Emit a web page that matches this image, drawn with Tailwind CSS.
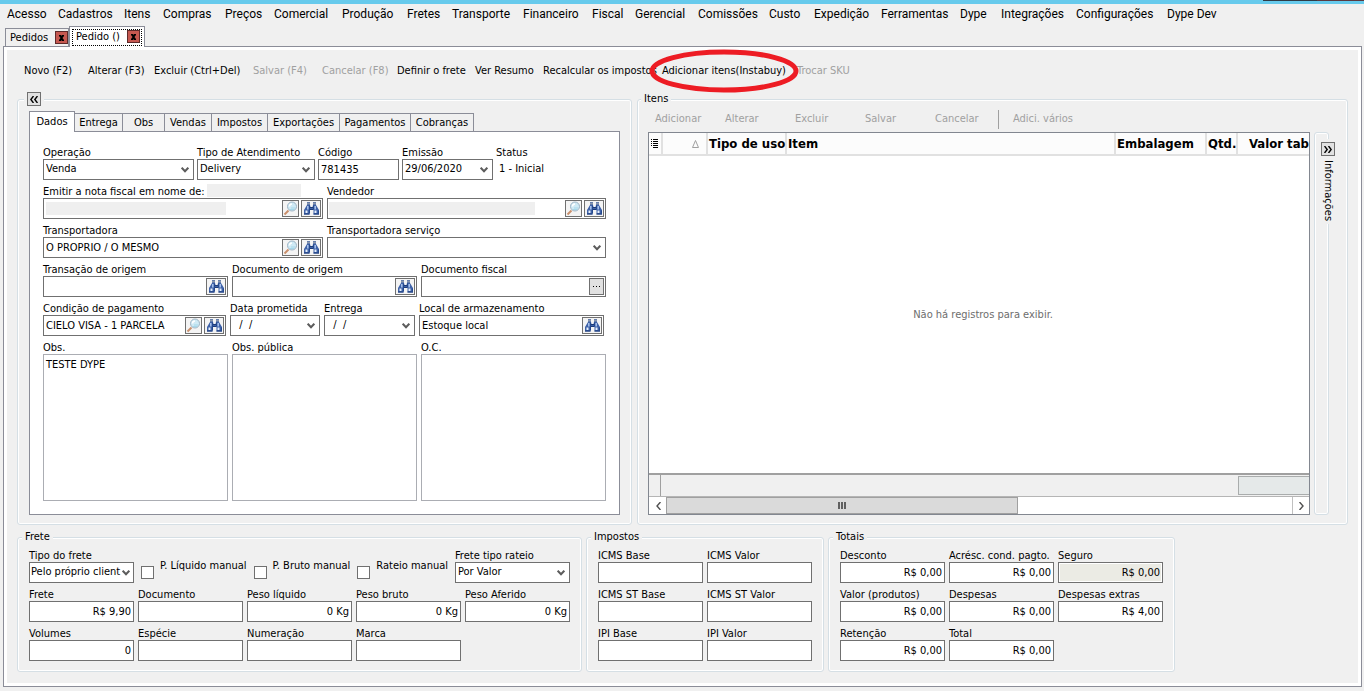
<!DOCTYPE html>
<html lang="pt-BR">
<head>
    <meta charset="UTF-8">
    <meta name="viewport" content="width=device-width, initial-scale=1.0">
    <title>Pedido</title>
    <script src="https://cdn.jsdelivr.net/npm/@tailwindcss/browser@4"></script>
</head>
<body class="min-h-screen flex flex-col bg-[#f0f0f0] text-black text-[11px] leading-[14px] font-['DejaVu_Sans_Condensed','DejaVu_Sans',sans-serif] overflow-x-hidden">
    <!-- Icons -->
    <svg class="hidden">
        <symbol id="chevron" viewBox="0 0 8 6"><path d="M.7.7 4 4.200 7.300.7" fill="none" stroke="#5c5c5c" stroke-width="2"/></symbol>
        <symbol id="lens" viewBox="0 0 15 15">
            <path d="M1.500 13.500 5.500 9.500" stroke="#c98f6b" stroke-width="2"/>
            <circle cx="9" cy="5.500" r="4.500" fill="#cfeaf5" stroke="#9fb4c4"/>
            <path d="M6.500 5.500a2.500 2.500 0 0 1 2.500-2.500" fill="none" stroke="#fff" stroke-width="1.500"/>
            <path d="M7 8.500h4M8 7h4" stroke="#a5d8ea"/>
        </symbol>
        <symbol id="binoc" viewBox="0 0 17 15">
            <path d="M4 1h3v3l.5 2h2l.5-2V1h3v3l3 5v4.500h-5.500V9h-4v4.500H1V9l3-5z" fill="#3f62a8"/>
            <path d="M4 2.500h3M10 2.500h3" stroke="#8a97ad" stroke-width="2"/>
            <path d="M4.800 5v3.500M12.200 5v3.500" stroke="#a9c4ee" stroke-width="1.500"/>
            <path d="M3.500 9.500v2.500M12.500 9.500v2.500" stroke="#e6effc" stroke-width="2"/>
            <path d="M1 13h5.500M10.500 13h5.500M7 6.500h3M7 8.500h3" stroke="#1d3b78"/>
            <path d="M6.500 4.500v8M15.500 9.500v3M10.500 4.500v4" stroke="#24488c"/>
        </symbol>
    </svg>

    <!-- Window edge -->
    <div class="h-1 bg-[#67caec] flex justify-end">
        <div class="h-px w-[54px] bg-[#2f3b46]"></div>
        <div class="h-px w-[47px] bg-[#5b3a40]"></div>
    </div>

    <!-- Menu -->
    <nav class="h-[22px] pl-[7px] pb-0.5 grid grid-cols-[51px_66px_39px_62px_49px_68px_65px_45px_71px_69px_43px_63px_71px_45px_67px_79px_41px_75px_91px_60px] items-center text-[12px] leading-4 font-[Roboto,'Open_Sans',sans-serif] whitespace-nowrap">
        <a href="#">Acesso</a>
        <a href="#">Cadastros</a>
        <a href="#">Itens</a>
        <a href="#">Compras</a>
        <a href="#">Preços</a>
        <a href="#">Comercial</a>
        <a href="#">Produção</a>
        <a href="#">Fretes</a>
        <a href="#">Transporte</a>
        <a href="#">Financeiro</a>
        <a href="#">Fiscal</a>
        <a href="#">Gerencial</a>
        <a href="#">Comissões</a>
        <a href="#">Custo</a>
        <a href="#">Expedição</a>
        <a href="#">Ferramentas</a>
        <a href="#">Dype</a>
        <a href="#">Integrações</a>
        <a href="#">Configurações</a>
        <a href="#">Dype Dev</a>
    </nav>

    <!-- Open windows -->
    <div class="h-5 pl-[5px] flex items-end">
        <div class="w-16 h-[18px] pl-1 flex items-center justify-between border border-b-0 border-[#8b8d98]">
            <span>Pedidos</span>
            <button class="size-[13px] border border-[#5e2a2a] bg-[#c65850] flex items-center justify-center" aria-label="Fechar">
                <svg class="w-[5px] h-1.5" viewBox="0 0 5 6"><path d="M0 0h2l.5 1L3 0h2v1L3.500 3 5 5v1H3l-.5-1L2 6H0V5l1.500-2L0 1z"/></svg>
            </button>
        </div>
        <div class="relative z-10 w-[76px] h-[21px] -mb-px p-0.5 border border-b-0 border-[#8b8d98] bg-white">
            <div class="h-[17px] pl-[3px] pr-px flex items-start justify-between border border-dotted border-black">
                <span>Pedido ()</span>
                <button class="size-[13px] border border-[#5e2a2a] bg-[#c65850] flex items-center justify-center" aria-label="Fechar">
                    <svg class="w-[5px] h-1.5" viewBox="0 0 5 6"><path d="M0 0h2l.5 1L3 0h2v1L3.500 3 5 5v1H3l-.5-1L2 6H0V5l1.500-2L0 1z"/></svg>
                </button>
            </div>
        </div>
    </div>

    <main class="flex-1 flex flex-col ml-[3px] mr-0.5 mb-1 p-[3px] border border-[#8b8d98] bg-white">
        <div class="flex-1 flex flex-col pl-2.5 pr-2.5 pb-[11px] bg-[#f0f0f0]">
            <!-- Toolbar -->
            <div class="h-[42px] pl-[7px] grid grid-cols-[64px_66px_99px_69px_75px_78px_68px_119px_135px_60px] items-center justify-items-start whitespace-nowrap">
                <button>Novo (F2)</button>
                <button>Alterar (F3)</button>
                <button>Excluir (Ctrl+Del)</button>
                <button disabled class="text-[#a0a0a0]">Salvar (F4)</button>
                <button disabled class="text-[#a0a0a0]">Cancelar (F8)</button>
                <button>Definir o frete</button>
                <button>Ver Resumo</button>
                <button>Recalcular os impostos</button>
                <button class="relative z-10">Adicionar itens(Instabuy)
                    <svg class="absolute left-1/2 top-1/2 -translate-1/2 w-[150px] h-11" viewBox="0 0 150 44"><ellipse cx="75" cy="22" rx="72" ry="19" fill="none" stroke="#ed1c24" stroke-width="5"/></svg>
                </button>
                <button disabled class="text-[#a0a0a0]">Trocar SKU</button>
            </div>

            <div class="flex-1 flex gap-[5px]">
                <!-- Order data -->
                <fieldset class="w-[615px] shrink-0 min-w-0 flex flex-col px-[11px] pb-[9px] border border-[#d5dfe5] rounded-[3px] shadow-[inset_0_0_0_1px_white]">
                    <legend class="-ml-[5px] px-[3px] bg-[#f0f0f0]">
                        <button class="size-3.5 border border-[#707070] bg-[#e1e1e1] flex items-center justify-center" aria-label="Recolher">
                            <svg class="w-2 h-[7px]" viewBox="0 0 8 7"><path d="M3.500 0 .8 3.500l2.700 3.500M7.500 0 4.800 3.500l2.700 3.500" fill="none" stroke="#000" stroke-width="1.400"/></svg>
                        </button>
                    </legend>
                    <div class="mt-[5px] h-5 flex items-end text-center [&_button]:h-[18px] [&_button]:pt-px [&_button]:border [&_button]:border-l-0 [&_button]:border-b-0 [&_button]:border-[#8b8d98]" role="tablist">
                        <div class="relative z-10 w-[46px] h-[21px] -mb-px pt-[3px] border border-b-0 border-[#8b8d98] bg-white" role="tab">Dados</div>
                        <button class="w-12">Entrega</button>
                        <button class="w-[42px]">Obs</button>
                        <button class="w-[47px]">Vendas</button>
                        <button class="w-14">Impostos</button>
                        <button class="w-[72px]">Exportações</button>
                        <button class="w-[71px]">Pagamentos</button>
                        <button class="w-[63px]">Cobranças</button>
                    </div>
                    <div class="flex-1 flex flex-col px-[13px] pt-[9px] pb-[13px] border border-[#8b8d98] bg-white whitespace-nowrap [&_label]:block [&_label]:h-[18px] [&_label]:pt-[5px]">
                        <div class="flex gap-[3px]">
                            <div class="w-[151px]">
                                <label for="operacao">Operação</label>
                                <div class="relative">
                                    <select id="operacao" class="w-full h-[21px] pl-0.5 pb-px appearance-none border border-[#707070] bg-white"><option>Venda</option></select>
                                    <svg class="absolute right-[5px] top-2 w-2 h-1.5 pointer-events-none"><use href="#chevron"/></svg>
                                </div>
                            </div>
                            <div class="w-[118px]">
                                <label for="tipo">Tipo de Atendimento</label>
                                <div class="relative">
                                    <select id="tipo" class="w-full h-[21px] pl-0.5 pb-px appearance-none border border-[#707070] bg-white"><option>Delivery</option></select>
                                    <svg class="absolute right-[5px] top-2 w-2 h-1.5 pointer-events-none"><use href="#chevron"/></svg>
                                </div>
                            </div>
                            <div class="w-[81px]">
                                <label for="codigo">Código</label>
                                <input id="codigo" value="781435" class="w-full h-[21px] pl-0.5 pb-px border border-[#707070]">
                            </div>
                            <div class="w-[91px]">
                                <label for="emissao">Emissão</label>
                                <div class="h-[21px] flex border border-[#707070]">
                                    <input id="emissao" value="29/06/2020" class="flex-1 min-w-0 pl-0.5 pb-px">
                                    <button class="px-1" aria-label="Abrir calendário"><svg class="w-2 h-1.5"><use href="#chevron"/></svg></button>
                                </div>
                            </div>
                            <div>
                                <div class="h-[18px] pt-[5px]">Status</div>
                                <div class="pl-[3px] pt-[3px]">1 - Inicial</div>
                            </div>
                        </div>

                        <div class="flex gap-1">
                            <div class="w-[280px]">
                                <div class="flex gap-0.5">
                                    <label for="nota">Emitir a nota fiscal em nome de:</label>
                                    <span class="mt-1 w-[94px] h-[13px] bg-[#efefef]"></span>
                                </div>
                                <div class="h-[21px] p-px flex gap-0.5 border border-[#707070]">
                                    <span class="ml-px mt-0.5 w-[180px] h-[13px] bg-[#efefef]"></span>
                                    <input id="nota" class="flex-1 min-w-0">
                                    <button class="w-[17px] h-[17px] border border-[#707070] bg-[#f4f4f4]" aria-label="Visualizar"><svg class="size-[15px]"><use href="#lens"/></svg></button>
                                    <button class="w-5 h-[17px] border border-[#707070] bg-[#f4f4f4] flex justify-center" aria-label="Procurar"><svg class="w-[17px] h-[15px]"><use href="#binoc"/></svg></button>
                                </div>
                            </div>
                            <div class="w-[279px]">
                                <label for="vendedor">Vendedor</label>
                                <div class="h-[21px] p-px flex gap-0.5 border border-[#707070]">
                                    <span class="mt-0.5 w-[206px] h-[13px] bg-[#efefef]"></span>
                                    <input id="vendedor" class="flex-1 min-w-0">
                                    <button class="w-[17px] h-[17px] border border-[#707070] bg-[#f4f4f4]" aria-label="Visualizar"><svg class="size-[15px]"><use href="#lens"/></svg></button>
                                    <button class="w-5 h-[17px] border border-[#707070] bg-[#f4f4f4] flex justify-center" aria-label="Procurar"><svg class="w-[17px] h-[15px]"><use href="#binoc"/></svg></button>
                                </div>
                            </div>
                        </div>

                        <div class="flex gap-1">
                            <div class="w-[280px]">
                                <label for="transportadora">Transportadora</label>
                                <div class="h-[21px] p-px flex gap-0.5 border border-[#707070]">
                                    <input id="transportadora" value="O PROPRIO / O MESMO" class="flex-1 min-w-0 pl-px">
                                    <button class="w-[17px] h-[17px] border border-[#707070] bg-[#f4f4f4]" aria-label="Visualizar"><svg class="size-[15px]"><use href="#lens"/></svg></button>
                                    <button class="w-5 h-[17px] border border-[#707070] bg-[#f4f4f4] flex justify-center" aria-label="Procurar"><svg class="w-[17px] h-[15px]"><use href="#binoc"/></svg></button>
                                </div>
                            </div>
                            <div class="w-[279px]">
                                <label for="servico">Transportadora serviço</label>
                                <div class="relative">
                                    <select id="servico" class="w-full h-[21px] pl-0.5 pb-px appearance-none border border-[#707070] bg-white"><option></option></select>
                                    <svg class="absolute right-[5px] top-2 w-2 h-1.5 pointer-events-none"><use href="#chevron"/></svg>
                                </div>
                            </div>
                        </div>

                        <div class="flex gap-1">
                            <div class="w-[185px]">
                                <label for="transacao">Transação de origem</label>
                                <div class="h-[21px] p-px flex border border-[#707070]">
                                    <input id="transacao" class="flex-1 min-w-0 pl-px">
                                    <button class="w-5 h-[17px] border border-[#707070] bg-[#f4f4f4] flex justify-center" aria-label="Procurar"><svg class="w-[17px] h-[15px]"><use href="#binoc"/></svg></button>
                                </div>
                            </div>
                            <div class="w-[185px]">
                                <label for="docorigem">Documento de origem</label>
                                <div class="h-[21px] p-px flex border border-[#707070]">
                                    <input id="docorigem" class="flex-1 min-w-0 pl-px">
                                    <button class="w-5 h-[17px] border border-[#707070] bg-[#f4f4f4] flex justify-center" aria-label="Procurar"><svg class="w-[17px] h-[15px]"><use href="#binoc"/></svg></button>
                                </div>
                            </div>
                            <div class="w-[185px]">
                                <label for="docfiscal">Documento fiscal</label>
                                <div class="h-[21px] p-px flex border border-[#707070]">
                                    <input id="docfiscal" class="flex-1 min-w-0 pl-px">
                                    <button class="w-[15px] h-[17px] border border-[#707070] bg-[#e1e1e1] flex items-center justify-center" aria-label="Selecionar"><svg class="w-2 h-px" viewBox="0 0 8 1"><path d="M0 0h1v1H0zM3 0h1v1H3zM6 0h1v1H6z"/></svg></button>
                                </div>
                            </div>
                        </div>

                        <div class="flex gap-1">
                            <div class="w-[183px]">
                                <label for="condicao">Condição de pagamento</label>
                                <div class="h-[21px] p-px flex gap-0.5 border border-[#707070]">
                                    <input id="condicao" value="CIELO VISA - 1 PARCELA" class="flex-1 min-w-0 pl-px">
                                    <button class="w-[17px] h-[17px] border border-[#707070] bg-[#f4f4f4]" aria-label="Visualizar"><svg class="size-[15px]"><use href="#lens"/></svg></button>
                                    <button class="w-5 h-[17px] border border-[#707070] bg-[#f4f4f4] flex justify-center" aria-label="Procurar"><svg class="w-[17px] h-[15px]"><use href="#binoc"/></svg></button>
                                </div>
                            </div>
                            <div class="w-[90px]">
                                <label for="prometida">Data prometida</label>
                                <div class="h-[21px] flex border border-[#707070]">
                                    <input id="prometida" value="  /  /" class="flex-1 min-w-0 pl-0.5 pb-px">
                                    <button class="px-1" aria-label="Abrir calendário"><svg class="w-2 h-1.5"><use href="#chevron"/></svg></button>
                                </div>
                            </div>
                            <div class="w-[91px]">
                                <label for="entrega">Entrega</label>
                                <div class="h-[21px] flex border border-[#707070]">
                                    <input id="entrega" value="  /  /" class="flex-1 min-w-0 pl-0.5 pb-px">
                                    <button class="px-1" aria-label="Abrir calendário"><svg class="w-2 h-1.5"><use href="#chevron"/></svg></button>
                                </div>
                            </div>
                            <div class="w-[185px]">
                                <label for="local">Local de armazenamento</label>
                                <div class="h-[21px] p-px flex border border-[#707070]">
                                    <input id="local" value="Estoque local" class="flex-1 min-w-0 pl-px">
                                    <button class="w-5 h-[17px] border border-[#707070] bg-[#f4f4f4] flex justify-center" aria-label="Procurar"><svg class="w-[17px] h-[15px]"><use href="#binoc"/></svg></button>
                                </div>
                            </div>
                        </div>

                        <div class="flex-1 grid grid-cols-3 gap-1">
                            <div class="flex flex-col">
                                <label for="obs">Obs.</label>
                                <textarea id="obs" class="flex-1 w-full px-0.5 pt-[3px] resize-none border border-[#abadb3]">TESTE DYPE</textarea>
                            </div>
                            <div class="flex flex-col">
                                <label for="obspublica">Obs. pública</label>
                                <textarea id="obspublica" class="flex-1 w-full px-0.5 pt-[3px] resize-none border border-[#abadb3]"></textarea>
                            </div>
                            <div class="flex flex-col">
                                <label for="oc">O.C.</label>
                                <textarea id="oc" class="flex-1 w-full px-0.5 pt-[3px] resize-none border border-[#abadb3]"></textarea>
                            </div>
                        </div>
                    </div>
                </fieldset>

                <!-- Items -->
                <fieldset class="flex-1 min-w-0 flex flex-col pl-2.5 pr-[18px] pb-[9px] border border-[#d5dfe5] rounded-[3px] shadow-[inset_0_0_0_1px_white]">
                    <legend class="-ml-[7px] px-[3px] bg-[#f0f0f0]">Itens</legend>
                    <div class="h-[26px] pl-[7px] flex items-center text-left text-[#a0a0a0] [&_button]:w-[70px] [&_button]:text-left">
                        <button disabled>Adicionar</button>
                        <button disabled>Alterar</button>
                        <button disabled>Excluir</button>
                        <button disabled>Salvar</button>
                        <button disabled>Cancelar</button>
                        <span class="-ml-[7px] mr-3.5 w-px h-[19px] bg-[#a0a0a0]"></span>
                        <button disabled>Adici. vários</button>
                    </div>
                    <div class="flex-1 flex gap-1">
                        <div class="flex-1 min-w-0 flex flex-col border border-[#828790] bg-white">
                            <table class="w-full table-fixed text-left text-[13px] leading-4 whitespace-nowrap bg-[#fcfcfc]">
                                <thead>
                                    <tr class="h-[22px] border-b-2 border-[#e1e1e1] [&_th]:border-r-2 [&_th]:border-[#e1e1e1] [&_th]:pl-px">
                                        <th class="w-[13px]"><svg class="w-[7px] h-[9px] mx-px" viewBox="0 0 7 9"><path d="M0 0h1v1H0zM2 0h5v1H2zM0 2h1v1H0zM2 2h5v1H2zM0 4h1v1H0zM2 4h5v1H2zM0 6h1v1H0zM2 6h5v1H2zM2 8h5v1H2z"/></svg></th>
                                        <th class="w-[45px]"><svg class="w-[7px] h-2 ml-7" viewBox="0 0 7 8"><path d="M3.500.5.500 7.500h6z" fill="none" stroke="#a0a0a0"/></svg></th>
                                        <th class="w-[79px]">Tipo de uso</th>
                                        <th>Item</th>
                                        <th class="w-[91px]">Embalagem</th>
                                        <th class="w-[31px]">Qtd.</th>
                                        <th class="w-[72px] border-r-0!"><span class="pl-2.5">Valor tab</span></th>
                                    </tr>
                                </thead>
                            </table>
                            <div class="flex-1 flex items-center justify-center pl-2 text-[#6d6d6d]">Não há registros para exibir.</div>
                            <div class="h-[23px] flex justify-between border-t-2 border-[#a0a0a0] bg-[#f0f0f0]">
                                <div class="w-3 border-r border-[#a0a0a0]"></div>
                                <div class="mt-px w-[71px] h-[19px] border border-r-0 border-[#a9acac] bg-[#e5e9e9]"></div>
                            </div>
                            <div class="h-[18px] pl-px flex border-t border-[#b5b5b5]">
                                <button class="w-4 flex items-center justify-center" aria-label="Rolar para a esquerda"><svg class="w-[5px] h-2" viewBox="0 0 5 8"><path d="M4.500 0 1 4l3.500 4" fill="none" stroke="#505050" stroke-width="1.400"/></svg></button>
                                <div class="w-[352px] flex items-center justify-center border border-[#a0a0a0] bg-[#dadada]"><svg class="w-2 h-[7px]" viewBox="0 0 8 7"><path d="M0 0h2v7H0zM3 0h2v7H3zM6 0h2v7H6z" fill="#606060"/></svg></div>
                                <div class="flex-1"></div>
                                <button class="w-[17px] border-l border-[#c0c0c0] flex items-center justify-center" aria-label="Rolar para a direita"><svg class="w-[5px] h-2" viewBox="0 0 5 8"><path d="M.5 0 4 4 .5 8" fill="none" stroke="#505050" stroke-width="1.400"/></svg></button>
                            </div>
                        </div>
                        <div class="relative w-[15px] border border-[#d5dfe5] rounded-[3px] shadow-[inset_0_0_0_1px_white]">
                            <div class="absolute left-1.5 top-1.5 py-[3px] flex flex-col items-center gap-1 bg-[#f0f0f0]">
                                <button class="size-3.5 border border-[#707070] bg-[#e1e1e1] flex items-center justify-center" aria-label="Expandir">
                                    <svg class="w-2 h-[7px]" viewBox="0 0 8 7"><path d="m.5 0 2.700 3.500L.5 7M4.500 0l2.700 3.500L4.500 7" fill="none" stroke="#000" stroke-width="1.400"/></svg>
                                </button>
                                <span class="[writing-mode:vertical-rl]">Informações</span>
                            </div>
                        </div>
                    </div>
                </fieldset>
            </div>

            <!-- Freight, taxes and totals -->
            <div class="mt-[5px] flex gap-1 whitespace-nowrap [&_label]:block [&_.field_label]:h-[18px] [&_.field_label]:pt-[5px] [&_.field_input]:w-full [&_.field_input]:h-[21px] [&_.field_input]:px-0.5 [&_.field_input]:pb-px [&_.field_input]:border [&_.field_input]:border-[#707070] [&_.field_input]:bg-white [&_.field_input]:text-right">
                <fieldset class="w-[565px] px-[11px] pb-2.5 border border-[#d5dfe5] rounded-[3px] shadow-[inset_0_0_0_1px_white]">
                    <legend class="-ml-[7px] px-[3px] bg-[#f0f0f0]">Frete</legend>
                    <div class="flex justify-between">
                        <div class="field w-[105px]">
                            <label for="tipofrete">Tipo do frete</label>
                            <div class="relative">
                                <select id="tipofrete" class="w-full h-[21px] pl-px pr-3 pb-px appearance-none border border-[#707070] bg-white"><option>Pelo próprio client</option></select>
                                <svg class="absolute right-1 top-2 w-2 h-1.5 pointer-events-none"><use href="#chevron"/></svg>
                            </div>
                        </div>
                        <div class="pt-[15px] flex gap-1.5">
                            <input type="checkbox" id="pliquido" class="mt-[7px] size-[13px] appearance-none border border-[#707070] bg-white">
                            <label for="pliquido">P. Líquido manual</label>
                        </div>
                        <div class="pt-[15px] flex gap-1.5">
                            <input type="checkbox" id="pbruto" class="mt-[7px] size-[13px] appearance-none border border-[#707070] bg-white">
                            <label for="pbruto">P. Bruto manual</label>
                        </div>
                        <div class="pt-[15px] flex gap-1.5">
                            <input type="checkbox" id="rateio" class="mt-[7px] size-[13px] appearance-none border border-[#707070] bg-white">
                            <label for="rateio">Rateio manual</label>
                        </div>
                        <div class="field w-[115px]">
                            <label for="tiporateio">Frete tipo rateio</label>
                            <div class="relative">
                                <select id="tiporateio" class="w-full h-[21px] pl-0.5 pb-px appearance-none border border-[#707070] bg-white"><option>Por Valor</option></select>
                                <svg class="absolute right-[5px] top-2 w-2 h-1.5 pointer-events-none"><use href="#chevron"/></svg>
                            </div>
                        </div>
                    </div>
                    <div class="grid grid-cols-5 gap-x-1">
                        <div class="field"><label for="frete">Frete</label><input id="frete" value="R$ 9,90"></div>
                        <div class="field"><label for="documento">Documento</label><input id="documento"></div>
                        <div class="field"><label for="pesoliquido">Peso líquido</label><input id="pesoliquido" value="0 Kg"></div>
                        <div class="field"><label for="pesobruto">Peso bruto</label><input id="pesobruto" value="0 Kg"></div>
                        <div class="field"><label for="pesoaferido">Peso Aferido</label><input id="pesoaferido" value="0 Kg"></div>
                        <div class="field"><label for="volumes">Volumes</label><input id="volumes" value="0"></div>
                        <div class="field"><label for="especie">Espécie</label><input id="especie"></div>
                        <div class="field"><label for="numeracao">Numeração</label><input id="numeracao"></div>
                        <div class="field"><label for="marca">Marca</label><input id="marca"></div>
                    </div>
                </fieldset>

                <fieldset class="w-[238px] px-[11px] pb-2.5 border border-[#d5dfe5] rounded-[3px] shadow-[inset_0_0_0_1px_white]">
                    <legend class="-ml-[7px] px-[3px] bg-[#f0f0f0]">Impostos</legend>
                    <div class="grid grid-cols-2 gap-x-1">
                        <div class="field"><label for="icmsbase">ICMS Base</label><input id="icmsbase"></div>
                        <div class="field"><label for="icmsvalor">ICMS Valor</label><input id="icmsvalor"></div>
                        <div class="field"><label for="icmsstbase">ICMS ST Base</label><input id="icmsstbase"></div>
                        <div class="field"><label for="icmsstvalor">ICMS ST Valor</label><input id="icmsstvalor"></div>
                        <div class="field"><label for="ipibase">IPI Base</label><input id="ipibase"></div>
                        <div class="field"><label for="ipivalor">IPI Valor</label><input id="ipivalor"></div>
                    </div>
                </fieldset>

                <fieldset class="w-[347px] px-[11px] pb-2.5 border border-[#d5dfe5] rounded-[3px] shadow-[inset_0_0_0_1px_white]">
                    <legend class="-ml-[7px] px-[3px] bg-[#f0f0f0]">Totais</legend>
                    <div class="grid grid-cols-3 gap-x-1">
                        <div class="field"><label for="desconto">Desconto</label><input id="desconto" value="R$ 0,00"></div>
                        <div class="field"><label for="acresc">Acrésc. cond. pagto.</label><input id="acresc" value="R$ 0,00"></div>
                        <div class="field"><label for="seguro">Seguro</label><input id="seguro" value="R$ 0,00" readonly class="bg-[#ebebe4]! shadow-[inset_0_0_0_1px_white]"></div>
                        <div class="field"><label for="valorprod">Valor (produtos)</label><input id="valorprod" value="R$ 0,00"></div>
                        <div class="field"><label for="despesas">Despesas</label><input id="despesas" value="R$ 0,00"></div>
                        <div class="field"><label for="extras">Despesas extras</label><input id="extras" value="R$ 4,00"></div>
                        <div class="field"><label for="retencao">Retenção</label><input id="retencao" value="R$ 0,00"></div>
                        <div class="field"><label for="total">Total</label><input id="total" value="R$ 0,00"></div>
                    </div>
                </fieldset>
            </div>
        </div>
    </main>
</body>
</html>
